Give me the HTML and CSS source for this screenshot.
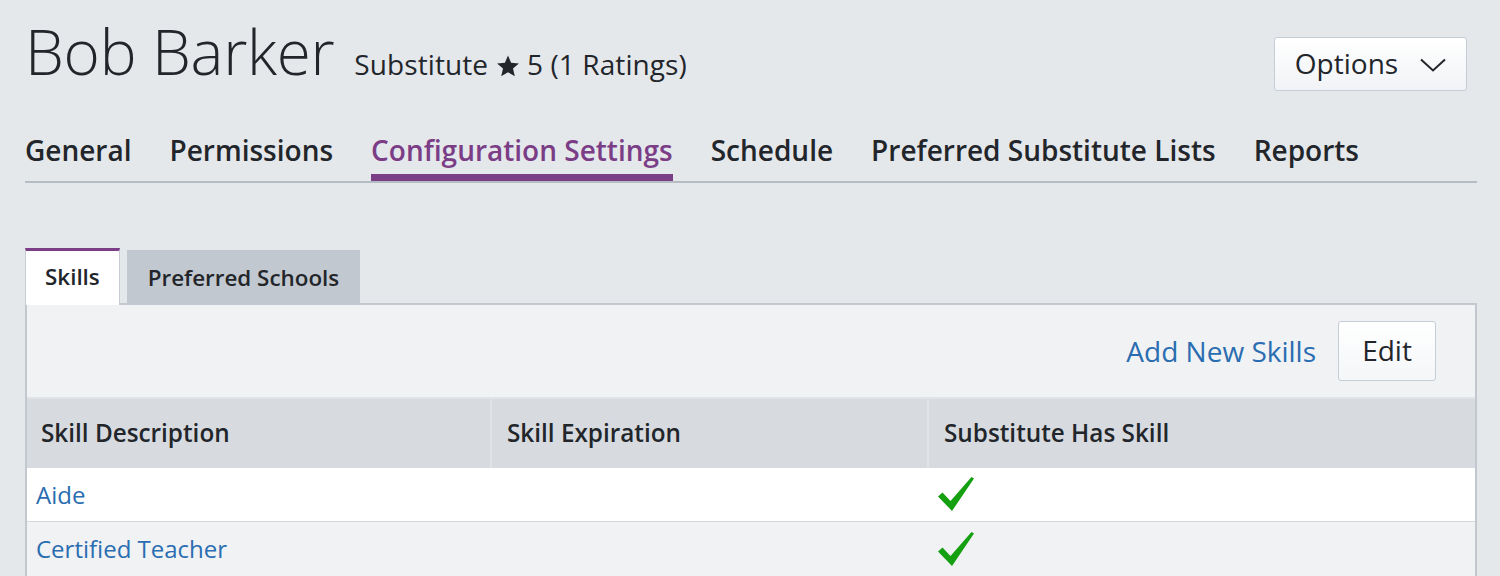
FILE: index.html
```html
<!DOCTYPE html>
<html lang="en">
<head>
<meta charset="utf-8">
<title>Bob Barker</title>
<link rel="stylesheet" href="styles.css">
</head>
<body>
<div class="page">
  <header class="head">
    <div class="title">
      <h1 class="name">Bob Barker</h1>
      <span class="meta">Substitute <svg class="star" viewBox="0 0 24 24" width="24" height="24"><path d="M12 1.5l3.1 7.2 7.8.7-5.9 5.2 1.8 7.7L12 18.2l-6.8 4.1 1.8-7.7-5.9-5.2 7.8-.7z" fill="#22262b"/></svg> 5 (1 Ratings)</span>
    </div>
    <button class="options">Options <svg class="chev" viewBox="0 0 26 14" width="26" height="14"><path d="M1 1.5l12 11 12-11" fill="none" stroke="#22262b" stroke-width="2"/></svg></button>
  </header>

  <nav class="nav">
    <a class="nav-item">General</a>
    <a class="nav-item">Permissions</a>
    <a class="nav-item active">Configuration Settings</a>
    <a class="nav-item">Schedule</a>
    <a class="nav-item">Preferred Substitute Lists</a>
    <a class="nav-item">Reports</a>
  </nav>

  <div class="tabs">
    <div class="tab active">Skills</div>
    <div class="tab">Preferred Schools</div>
  </div>

  <section class="panel">
    <div class="toolbar">
      <a class="link add">Add New Skills</a>
      <button class="edit">Edit</button>
    </div>
    <div class="table">
      <div class="row thead">
        <div class="cell">Skill Description</div>
        <div class="cell">Skill Expiration</div>
        <div class="cell">Substitute Has Skill</div>
      </div>
      <div class="row body odd">
        <div class="cell"><a class="link">Aide</a></div>
        <div class="cell"></div>
        <div class="cell check-cell"><svg class="check" viewBox="0 0 36 34" width="36" height="34"><path d="M0 19.5L4.5 15.5 12.5 24 33.5 0 36 1.5 14 34Z" fill="#14a011"/></svg></div>
      </div>
      <div class="row body even">
        <div class="cell"><a class="link">Certified Teacher</a></div>
        <div class="cell"></div>
        <div class="cell check-cell"><svg class="check" viewBox="0 0 36 34" width="36" height="34"><path d="M0 19.5L4.5 15.5 12.5 24 33.5 0 36 1.5 14 34Z" fill="#14a011"/></svg></div>
      </div>
    </div>
  </section>
</div>
</body>
</html>
```

FILE: styles.css
```css
* { box-sizing: border-box; }
html, body { margin: 0; padding: 0; }
body {
  background: #e5e8eb;
  font-family: "Open Sans", "Noto Sans", sans-serif;
  color: #22262b;
  overflow: hidden;
}
.page {
  padding: 0 23px 0 25px;
}
.head {
  display: flex;
  justify-content: space-between;
  align-items: flex-start;
  height: 116px;
}
.title {
  display: flex;
  align-items: baseline;
  gap: 20px;
  padding-top: 9px;
}
.name {
  margin: 0;
  font-size: 62px;
  font-weight: 300;
  line-height: 84px;
  letter-spacing: -0.3px;
}
.meta {
  font-size: 28px;
  font-weight: 400;
  letter-spacing: 0.1px;
}
.star { vertical-align: -3px; }
.options {
  margin-top: 37px;
  margin-right: 10px;
  width: 193px;
  height: 54px;
  border: 1px solid #c4cdd8;
  border-radius: 3px;
  background: linear-gradient(#ffffff, #f1f3f6);
  font-family: inherit;
  font-size: 28px;
  color: #22262b;
  display: flex;
  align-items: center;
  justify-content: center;
  gap: 22px;
  padding: 0 0 2px 0;
}
.chev { margin-top: 4px; }
.nav {
  display: flex;
  gap: 38px;
  border-bottom: 2px solid #b6bcc4;
  height: 67px;
}
.nav-item {
  font-size: 28px;
  font-weight: 600;
  line-height: 40px;
  margin-top: 14px;
  color: #22262b;
  height: 51px;
}
.nav-item.active {
  color: #7a3d86;
  border-bottom: 7px solid #7a3d86;
}
.tabs {
  display: flex;
  gap: 7px;
  margin-top: 65px;
  align-items: flex-end;
  position: relative;
  z-index: 1;
  margin-bottom: -2px;
}
.tab {
  font-size: 22.4px;
  font-weight: 600;
  height: 55px;
  line-height: 55px;
  padding: 0 21px;
  background: #c2c8cf;
  color: #22262b;
}
.tab.active {
  background: #ffffff;
  border-top: 3px solid #7a3d86;
  border-left: 1px solid #c6cbd1;
  border-right: 1px solid #c6cbd1;
  height: 57px;
  line-height: 52px;
  padding: 0 19px;
}
.panel {
  border: 2px solid #c3c8ce;
  border-bottom: none;
  background: #f0f2f4;
}
.toolbar {
  display: flex;
  justify-content: flex-end;
  align-items: center;
  gap: 22px;
  height: 94px;
  padding-right: 39px;
  border-bottom: 2px solid #e1e4e7;
}
.link {
  color: #2a6db0;
  text-decoration: none;
}
.add { font-size: 28px; }
.edit {
  width: 98px;
  height: 60px;
  border: 1px solid #c4cdd8;
  border-radius: 3px;
  background: linear-gradient(#ffffff, #f4f6f8);
  font-family: inherit;
  font-size: 28px;
  color: #22262b;
  padding: 0 0 3px 0;
}
.table { display: flex; flex-direction: column; }
.row {
  display: grid;
  grid-template-columns: 463px 435px 1fr;
  column-gap: 2px;
}
.thead {
  background: #e1e4e7;
  height: 69px;
}
.thead .cell {
  background: #d7dbdf;
  font-size: 24.3px;
  font-weight: 600;
  line-height: 67px;
  padding-left: 14px;
}
.thead .cell + .cell { padding-left: 15px; }
.body .cell {
  font-size: 24px;
  line-height: 53px;
  padding-left: 9px;
}
.odd { background: #ffffff; border-bottom: 1px solid #d5d9dd; height: 54px; }
.even { background: #f0f2f4; height: 54px; }
.check-cell { padding-left: 9px; display: flex; align-items: center; }
.odd .check-cell { padding-bottom: 2px; }
.even .check-cell { padding-bottom: 0; }
```
